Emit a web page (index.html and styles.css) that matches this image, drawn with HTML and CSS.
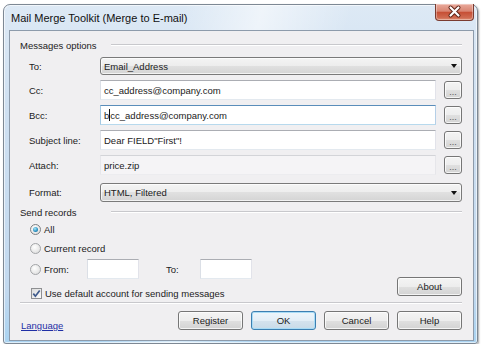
FILE: index.html
```html
<!DOCTYPE html>
<html>

<head>
    <meta charset="utf-8">
    <title>Mail Merge Toolkit (Merge to E-mail)</title>
    <link rel="stylesheet" href="styles.css">
</head>

<body>

    <div class="window">
        <div class="titlebar">
            <span class="title">Mail Merge Toolkit (Merge to E-mail)</span>
            <span class="close-btn">
                <svg width="39" height="17" viewBox="0 0 39 17">
                    <path d="M15.5 4.5 L23.5 12.5 M23.5 4.5 L15.5 12.5" stroke="#5b2114" stroke-width="4" stroke-linecap="round" fill="none"/>
                    <path d="M15.5 4.5 L23.5 12.5 M23.5 4.5 L15.5 12.5" stroke="#fff" stroke-width="2.2" stroke-linecap="round" fill="none"/>
                </svg>
            </span>
        </div>

        <div class="client">
            <div class="group-head">
                <span class="group-title">Messages options</span>
                <span class="rule"></span>
            </div>

            <div class="form">
                <span class="field-label">To:</span>
                <div class="combo"><span>Email_Address</span><span class="arrow"></span></div>

                <span class="field-label">Cc:</span>
                <div class="textbox">cc_address@company.com</div>
                <div class="btn browse">...</div>

                <span class="field-label">Bcc:</span>
                <div class="textbox focused">b<span class="caret"></span>cc_address@company.com</div>
                <div class="btn browse">...</div>

                <span class="field-label">Subject line:</span>
                <div class="textbox">Dear FIELD"First"!</div>
                <div class="btn browse">...</div>

                <span class="field-label">Attach:</span>
                <div class="textbox disabled">price.zip</div>
                <div class="btn browse">...</div>

                <span class="field-label last">Format:</span>
                <div class="combo last"><span>HTML, Filtered</span><span class="arrow"></span></div>
            </div>

            <div class="group-head records-head">
                <span class="group-title">Send records</span>
                <span class="rule"></span>
            </div>

            <div class="records">
                <div class="option"><span class="radio checked"></span><span>All</span></div>
                <div class="option"><span class="radio"></span><span>Current record</span></div>
                <div class="option range">
                    <span class="radio"></span><span class="from-label">From:</span>
                    <div class="textbox small"></div>
                    <span class="to-label">To:</span>
                    <div class="textbox small to-box"></div>
                </div>
            </div>

            <div class="account-row">
                <div class="option check-option">
                    <span class="checkbox">
                        <svg width="11" height="11" viewBox="0 0 11 11">
                            <path d="M2.3 5.6 L4.4 8.2 L8.7 2.4" stroke="#3f5a8c" stroke-width="1.7" fill="none"/>
                        </svg>
                    </span>
                    <span>Use default account for sending messages</span>
                </div>
                <div class="btn push">About</div>
            </div>

            <div class="separator"></div>

            <div class="bottom-row">
                <a class="link" href="#">Language</a>
                <div class="actions">
                    <div class="btn push">Register</div>
                    <div class="btn push default">OK</div>
                    <div class="btn push">Cancel</div>
                    <div class="btn push">Help</div>
                </div>
            </div>
        </div>
    </div>

</body>

</html>
```

FILE: styles.css
```css
* {
    box-sizing: border-box;
}

body {
    margin: 0;
    background: #fff;
    font: 9.5px "Liberation Sans", Arial, sans-serif;
    color: #1b1b1b;
}

.window {
    width: 475px;
    height: 340px;
    margin: 4px 0 0 3px;
    padding: 0 3px 2px 5px;
    display: flex;
    flex-direction: column;
    border: 1px solid #7d8894;
    border-radius: 7px 7px 3px 3px;
    background:
        linear-gradient(105deg, rgba(255, 255, 255, 0) 32%, rgba(255, 255, 255, .55) 46%, rgba(255, 255, 255, 0) 62%),
        linear-gradient(#dde9f5, #cfe0f1 30%, #c2d9ef 85%, #a9d3f1);
    box-shadow: 1px 1px 2px rgba(0, 0, 0, .35), inset 0 0 0 1px rgba(255, 255, 255, .6);
}

/* title bar */
.titlebar {
    height: 25px;
    margin: 0 -3px 0 -5px;
    padding: 0 3px 0 7px;
    display: flex;
    align-items: center;
    justify-content: space-between;
}

.title {
    font-size: 11px;
    color: #111;
}

.close-btn {
    align-self: flex-start;
    width: 39px;
    height: 17px;
    margin-top: -1px;
    border: 1px solid #7a3b30;
    border-top: none;
    border-radius: 0 0 4px 4px;
    background: linear-gradient(#e9aa9c, #d98572 45%, #c64f35 52%, #cf6a50 85%, #df8f74);
    box-shadow: inset 0 0 0 1px rgba(255, 255, 255, .35);
}

.close-btn svg {
    display: block;
    margin: -1px 0 0 -1px;
}

/* client area */
.client {
    flex: 1;
    display: flex;
    flex-direction: column;
    padding: 7px 11px 0 10px;
    border: 1px solid #8d9bab;
    background: #f0eff1;
}

.group-head {
    height: 14px;
    display: flex;
    align-items: center;
}

.group-title {
    width: 91px;
}

.rule {
    flex: 1;
    height: 2px;
    border-top: 1px solid #c8c8cc;
    border-bottom: 1px solid #fff;
}

.form {
    margin: 5px 0 0 9px;
    display: grid;
    grid-template-columns: 63px 1fr 18px;
    grid-template-rows: 18px 20px 20px 20px 20px 22px;
    column-gap: 8px;
    row-gap: 5px;
}

.field-label {
    align-self: center;
}

.field-label.last {
    align-self: end;
    line-height: 19px;
}

.combo {
    grid-column: 2 / 4;
    height: 18px;
    padding: 0 4px 0 3px;
    display: flex;
    align-items: center;
    justify-content: space-between;
    border: 1px solid #7a7a7a;
    border-radius: 3px;
    background: linear-gradient(#f4f4f4, #ededed 50%, #e0e0e0 50%, #d4d4d4);
    box-shadow: inset 0 0 0 1px rgba(255, 255, 255, .7);
}

.combo.last {
    align-self: end;
    height: 19px;
}

.arrow {
    width: 0;
    height: 0;
    border-left: 3.5px solid transparent;
    border-right: 3.5px solid transparent;
    border-top: 4px solid #111;
}

.textbox {
    height: 20px;
    padding: 0 3px;
    display: flex;
    align-items: center;
    background: #fff;
    border: 1px solid;
    border-color: #abadb3 #e2e3ea #e3e9ef #dbdfe6;
}

.textbox.focused {
    border-color: #5a8dba #b5cfe7 #b7d9ed #a4c9e3;
}

.textbox.disabled {
    background: #f5f4f6;
    border-color: #d3d4d8 #e6e6ea #ececef #e6e6ea;
}

.caret {
    width: 1px;
    height: 12px;
    background: #111;
}

.btn {
    display: flex;
    align-items: center;
    justify-content: center;
    border: 1px solid #767676;
    border-radius: 3px;
    background: linear-gradient(#f4f4f4, #ededed 50%, #e0e0e0 50%, #d3d3d3);
    box-shadow: inset 0 0 0 1px rgba(255, 255, 255, .75);
    color: #1b1b1b;
}

.browse {
    width: 18px;
    height: 18px;
    align-self: center;
    padding-top: 3px;
    font-size: 9px;
    color: #555;
}

.push {
    width: 65px;
    height: 19px;
}

.btn.default {
    border-color: #3c7fb1;
    background: linear-gradient(#eef6fb, #e3eef6 50%, #d5e3ee 50%, #c9dbe8);
    box-shadow: inset 0 0 0 1px #a9dcf6;
}

/* send records */
.records-head {
    margin-top: 3px;
}

.records {
    margin: 3px 0 0 10px;
    display: flex;
    flex-direction: column;
    gap: 5px;
}

.option {
    height: 14px;
    display: flex;
    align-items: center;
    gap: 3px;
}

.option.range {
    height: 20px;
    margin-top: -1px;
}

.radio {
    width: 11px;
    height: 11px;
    border: 1px solid #a3a5a8;
    border-radius: 50%;
    background: radial-gradient(circle at 40% 35%, #fff, #e4e4e4 70%, #d2d2d2);
    display: flex;
    align-items: center;
    justify-content: center;
}

.radio.checked {
    border-color: #7d8083;
}

.radio.checked::after {
    content: "";
    width: 5px;
    height: 5px;
    border-radius: 50%;
    background: radial-gradient(circle at 40% 35%, #a6e8fb, #2a8fc0 60%, #115a85);
}

.from-label {
    width: 40px;
}

.textbox.small {
    width: 52px;
}

.to-label {
    width: 31px;
    margin-left: 24px;
}

.to-box {
    width: 53px;
}

.account-row {
    height: 18px;
    margin-top: -2px;
    display: flex;
    justify-content: space-between;
}

.check-option {
    margin: 9px 0 0 11px;
}

.checkbox {
    width: 11px;
    height: 11px;
    border: 1px solid #8e8f92;
    background: linear-gradient(135deg, #dcdcdc, #fbfbfb);
}

.checkbox svg {
    display: block;
    margin: -1px 0 0 -1px;
}

.separator {
    height: 2px;
    margin-top: 7px;
    border-top: 1px solid #c8c8cc;
    border-bottom: 1px solid #fff;
}

.bottom-row {
    margin-top: 7px;
    display: flex;
    align-items: flex-end;
    justify-content: space-between;
}

.link {
    margin: 0 0 -1px 1px;
    color: #1f2fa6;
}

.actions {
    display: flex;
    gap: 8px;
}
```
